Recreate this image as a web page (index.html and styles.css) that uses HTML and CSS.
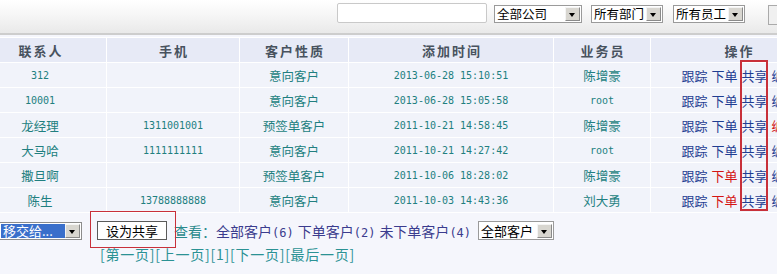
FILE: index.html
```html
<!DOCTYPE html>
<html lang="zh-CN">
<head>
<meta charset="utf-8">
<title>客户列表</title>
<link rel="stylesheet" href="styles.css">
</head>
<body>
<div class="page">
  <header class="toolbar">
    <input class="search" type="text">
    <div class="combo combo-company"><span class="combo-text">全部公司</span><span class="combo-btn"></span></div>
    <div class="combo combo-dept"><span class="combo-text">所有部门</span><span class="combo-btn"></span></div>
    <div class="combo combo-staff"><span class="combo-text">所有员工</span><span class="combo-btn"></span></div>
    <button class="query-btn">查询</button>
  </header>

  <main class="content">
    <table class="grid">
      <colgroup>
        <col class="c-name"><col class="c-phone"><col class="c-type"><col class="c-time"><col class="c-staff"><col class="c-ops">
      </colgroup>
      <thead>
        <tr><th>联系人</th><th>手机</th><th>客户性质</th><th>添加时间</th><th>业务员</th><th>操作</th></tr>
      </thead>
      <tbody>
        <tr><td class="mono">312</td><td class="mono"></td><td>意向客户</td><td class="mono">2013-06-28 15:10:51</td><td>陈增豪</td>
          <td><span class="ops"><a>跟踪</a><a>下单</a><a>共享</a><a>编辑</a></span></td></tr>
        <tr><td class="mono">10001</td><td class="mono"></td><td>意向客户</td><td class="mono">2013-06-28 15:05:58</td><td class="mono">root</td>
          <td><span class="ops"><a>跟踪</a><a>下单</a><a>共享</a><a>编辑</a></span></td></tr>
        <tr><td>龙经理</td><td class="mono">1311001001</td><td>预签单客户</td><td class="mono">2011-10-21 14:58:45</td><td>陈增豪</td>
          <td><span class="ops"><a>跟踪</a><a>下单</a><a>共享</a><a class="hot">编辑</a></span></td></tr>
        <tr><td>大马哈</td><td class="mono">1111111111</td><td>意向客户</td><td class="mono">2011-10-21 14:27:42</td><td class="mono">root</td>
          <td><span class="ops"><a>跟踪</a><a>下单</a><a>共享</a><a>编辑</a></span></td></tr>
        <tr><td>撒旦啊</td><td class="mono"></td><td>预签单客户</td><td class="mono">2011-10-06 18:28:02</td><td>陈增豪</td>
          <td><span class="ops"><a>跟踪</a><a class="hot">下单</a><a>共享</a><a>编辑</a></span></td></tr>
        <tr><td>陈生</td><td class="mono">13788888888</td><td>意向客户</td><td class="mono">2011-10-03 14:43:36</td><td>刘大勇</td>
          <td><span class="ops"><a>跟踪</a><a class="hot">下单</a><a>共享</a><a>编辑</a></span></td></tr>
      </tbody>
    </table>

    <div class="actions">
      <div class="combo combo-transfer"><span class="combo-text selected">移交给...</span><span class="combo-btn"></span></div>
      <button class="share-btn">设为共享</button>
      <span class="view-label">查看：</span>
      <a class="view-link">全部客户<span class="num">(6)</span></a>
      <a class="view-link">下单客户<span class="num">(2)</span></a>
      <a class="view-link">未下单客户<span class="num">(4)</span></a>
      <div class="combo combo-filter"><span class="combo-text">全部客户</span><span class="combo-btn"></span></div>
    </div>

    <nav class="pager"><a>[第一页]</a><a>[上一页]</a><a>[1]</a><a>[下一页]</a><a>[最后一页]</a></nav>
  </main>

  <div class="mark mark-share"></div>
  <div class="mark mark-button"></div>
</div>
</body>
</html>
```

FILE: styles.css
```css
html, body {
  margin: 0;
  padding: 0;
  overflow: hidden;
  background: #f5f6fc;
  font-family: "Noto Sans CJK SC", "Noto Sans", sans-serif;
}

.page {
  position: relative;
  width: 777px;
  height: 274px;
  overflow: hidden;
}

/* ---------- toolbar ---------- */
.toolbar {
  display: flex;
  align-items: flex-start;
  height: 30px;
  padding: 3px 0 0 337px;
  background: linear-gradient(#ffffff 0%, #f6f6f6 45%, #e9e9e9 100%);
  border-bottom: 2px solid #cdcdcd;
  white-space: nowrap;
}

.search {
  box-sizing: border-box;
  width: 150px;
  height: 20px;
  margin: 0;
  border: 1px solid #c9c9c9;
  border-radius: 2px;
  background: #fff;
  flex: none;
}

.combo {
  box-sizing: border-box;
  display: flex;
  align-items: center;
  height: 18px;
  border: 1px solid #9a9a9a;
  background: #fff;
  flex: none;
}

.combo-text {
  flex: 1;
  padding-left: 2px;
  font-size: 12.5px;
  line-height: 16px;
  color: #000;
  white-space: nowrap;
}

.combo-btn {
  box-sizing: border-box;
  position: relative;
  width: 15px;
  height: 14px;
  margin: 0 1px 0 0;
  background: #d8d6d0;
  border: 1px solid;
  border-color: #f4f4f4 #8a8a8a #8a8a8a #f4f4f4;
  flex: none;
}

.combo-btn::after {
  content: "";
  position: absolute;
  left: 3px;
  top: 5px;
  border-left: 3.5px solid transparent;
  border-right: 3.5px solid transparent;
  border-top: 4px solid #000;
}

.combo-company { width: 88px; margin: 2px 0 0 7px; }
.combo-dept { width: 72px; margin: 2px 0 0 9px; }
.combo-staff { width: 72px; margin: 2px 0 0 10px; }

.query-btn {
  box-sizing: border-box;
  height: 20px;
  margin: 2px 0 0 23px;
  padding: 0 8px;
  border: 1px solid #aaaaaa;
  background: #f0f0f0;
  font-family: inherit;
  font-size: 12px;
  flex: none;
}

/* ---------- grid ---------- */
.content {
  margin-top: 2px;
}

.grid {
  border-collapse: separate;
  border-spacing: 1px;
  table-layout: fixed;
  width: 854px;
  margin-left: -27px;
  background: #ffffff;
}

.c-name { width: 132px; }
.c-phone { width: 132px; }
.c-type { width: 108px; }
.c-time { width: 204px; }
.c-staff { width: 96px; }
.c-ops { width: 175px; }

.grid th,
.grid td {
  height: 24px;
  padding: 0;
  text-align: center;
  white-space: nowrap;
  overflow: hidden;
}

.grid th {
  background: #e7eaf6;
  color: #48525e;
  font-size: 13px;
  font-weight: bold;
  letter-spacing: 2px;
  text-indent: 2px;
}

.grid td {
  background: #f1f3fa;
  color: #217f80;
  font-size: 12.5px;
}

.grid td.mono {
  font-family: "DejaVu Sans Mono", "Liberation Mono", monospace;
  font-size: 10px;
}

.ops {
  display: inline-flex;
  gap: 4px;
  padding-left: 2px;
  font-size: 13px;
}

.ops a {
  color: #1f3d92;
}

.ops a.hot {
  color: #d41414;
}

/* ---------- actions ---------- */
.actions {
  display: flex;
  align-items: center;
  height: 19px;
  padding: 8px 0 0 0;
  white-space: nowrap;
}

.combo-transfer {
  width: 83px;
  margin-left: -1px;
  border-color: #8c8c8c;
}

.combo-transfer .combo-text.selected {
  align-self: stretch;
  margin: 1px 0 1px 1px;
  padding-left: 2px;
  background: #3a6fcb;
  color: #fff;
  font-size: 13px;
  line-height: 14px;
}

.share-btn {
  box-sizing: border-box;
  width: 70px;
  height: 19px;
  margin-left: 15px;
  padding: 0;
  border: 1px solid #5a5a5a;
  background: #fff;
  color: #000;
  font-family: inherit;
  font-size: 13px;
  line-height: 17px;
  flex: none;
}

.view-label {
  margin-left: 7px;
  font-size: 14px;
  color: #2a8a8c;
}

.view-link {
  margin-left: 4px;
  font-size: 14px;
  color: #3b3c8e;
}

.view-label + .view-link {
  margin-left: 0;
}

.num {
  font-family: "DejaVu Sans Mono", "Liberation Mono", monospace;
  font-size: 12px;
}

.combo-filter {
  width: 76px;
  height: 19px;
  margin-left: 7px;
}

.combo-filter .combo-text {
  font-size: 13px;
}

.pager {
  display: flex;
  padding: 6px 0 0 100px;
  font-size: 14px;
  line-height: 16px;
  letter-spacing: 0.75px;
  color: #2b9294;
}

.pager a {
  color: inherit;
}

/* ---------- red annotation marks ---------- */
.mark {
  position: absolute;
  box-sizing: border-box;
  border: 1px solid #c8303a;
  pointer-events: none;
}

.mark-share {
  left: 740px;
  top: 60px;
  width: 28px;
  height: 151px;
  border-width: 2px;
}

.mark-button {
  left: 90px;
  top: 211px;
  width: 86px;
  height: 37px;
}
```
